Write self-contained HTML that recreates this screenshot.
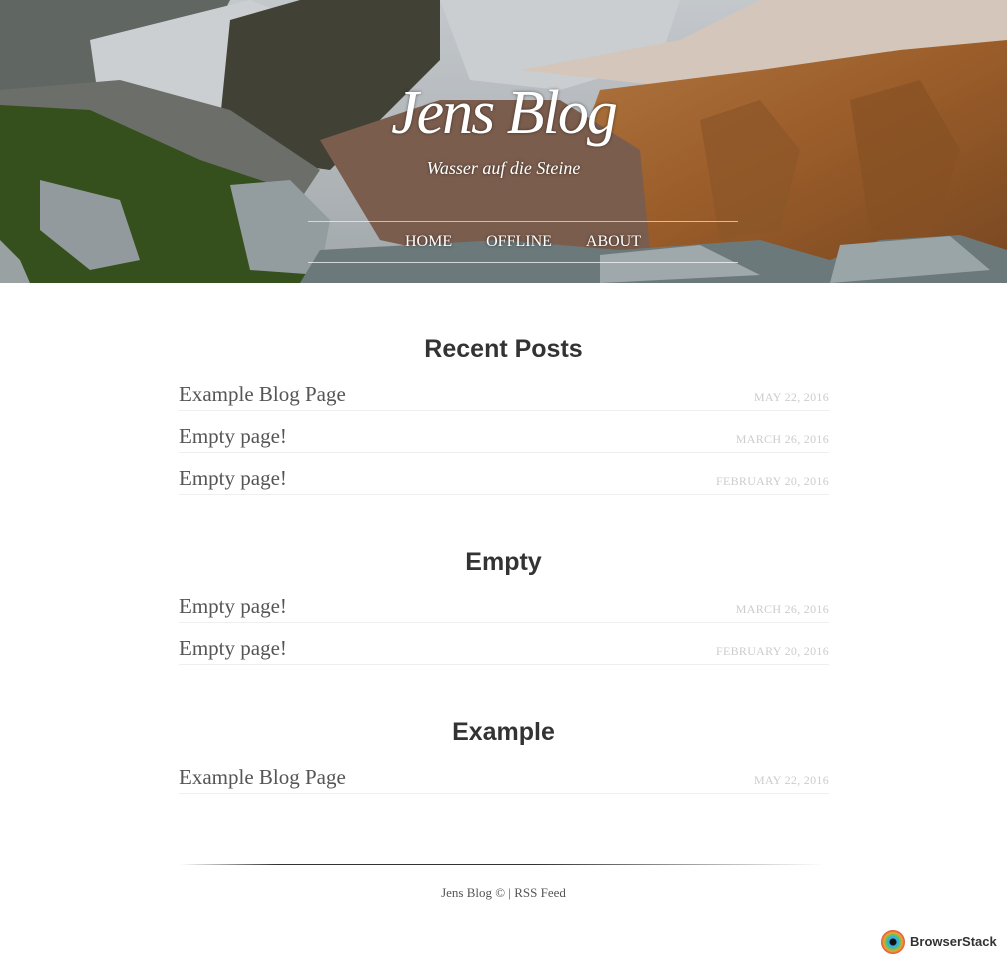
<!DOCTYPE html>
<html><head><meta charset="utf-8"><style>
*{margin:0;padding:0;box-sizing:border-box}
body{width:1007px;height:962px;background:#fff;font-family:"Liberation Serif",serif;position:relative;overflow:hidden}
.hero{position:absolute;left:0;top:0;width:1007px;height:283px;overflow:hidden}
.title{position:absolute;left:0;width:1007px;top:78px;text-align:center;color:#fff;font-family:"Liberation Serif",serif;font-style:italic;font-size:62px;letter-spacing:-2px;text-shadow:0 0 3px rgba(0,0,0,.5)}
.sub{position:absolute;left:0;width:1007px;top:158px;text-align:center;color:#fff;font-style:italic;font-size:18px;text-shadow:0 0 3px rgba(0,0,0,.6)}
.nav{position:absolute;left:308px;width:430px;top:221px;height:42px;border-top:1px solid rgba(255,255,255,.6);border-bottom:1px solid rgba(255,255,255,.7);text-align:center;color:#fff;font-size:16px;line-height:40px;text-shadow:0 0 3px rgba(0,0,0,.6)}
.nav span{margin:0 17px}
h2{font-family:"Liberation Sans",sans-serif;font-weight:bold;font-size:25px;color:#333;text-align:center;position:absolute;left:0;width:1007px}
.row{position:absolute;left:179px;width:650px;height:42px;border-bottom:1px solid #eee}
.row .t{position:absolute;left:0;top:13px;font-size:21px;color:#555}
.row .d{position:absolute;right:0;top:21px;font-size:12px;color:#ccc;letter-spacing:.3px}
.foot{position:absolute;top:885px;left:0;width:1007px;text-align:center;font-size:13px;color:#555}
.hr{position:absolute;left:180px;top:864px;width:645px;height:1px;background:linear-gradient(90deg,rgba(0,0,0,0),#333 15%,#333 55%,rgba(0,0,0,0))}
</style></head><body>
<div class="hero">
<svg width="1007" height="283" viewBox="0 0 1007 283">
<defs>
<linearGradient id="sky" x1="0" y1="0" x2="0" y2="1"><stop offset="0" stop-color="#dfe4e8"/><stop offset="1" stop-color="#b8bfc2"/></linearGradient>
<linearGradient id="or" x1="0" y1="0" x2="1" y2="1"><stop offset="0" stop-color="#c9874a"/><stop offset=".5" stop-color="#b06a30"/><stop offset="1" stop-color="#8a5226"/></linearGradient>
</defs>
<rect width="1007" height="283" fill="url(#sky)"/>
<polygon points="0,0 230,0 200,60 120,90 0,110" fill="#6e7570"/>
<polygon points="90,40 250,0 300,20 260,110 180,130 100,110" fill="#e9ecef"/>
<polygon points="230,20 300,0 440,0 440,60 380,120 330,170 260,160 220,120" fill="#4a4a3e"/>
<polygon points="0,90 120,80 230,110 320,170 300,200 200,190 0,150" fill="#7b7e78"/>
<polygon points="440,0 680,0 660,60 560,90 470,80" fill="#e7ebee"/>
<polygon points="520,70 680,40 760,0 1007,0 1007,60 900,60 800,80 700,90" fill="#f2e2d4"/>
<polygon points="600,90 760,70 900,50 1007,40 1007,260 800,270 650,250 560,200" fill="url(#or)"/>
<polygon points="320,140 440,100 560,100 640,150 650,250 520,270 380,240" fill="#8d6a58"/>
<polygon points="700,120 760,100 800,150 780,230 720,240" fill="#a0622e" opacity=".7"/>
<polygon points="850,100 920,80 960,150 930,240 870,230" fill="#9a5c2a" opacity=".7"/>
<polygon points="0,105 90,110 200,160 290,190 330,283 0,283" fill="#3d5a22"/>
<polygon points="40,180 120,200 140,260 90,270 40,230" fill="#a7b0b3"/>
<polygon points="230,185 290,180 330,220 320,275 250,270" fill="#a8b2b5"/>
<polygon points="0,240 20,260 30,283 0,283" fill="#b0b8ba"/>
<polygon points="320,250 500,240 620,250 760,240 830,260 880,240 960,235 1007,250 1007,283 300,283" fill="#7c8a8c"/>
<polygon points="600,255 700,245 760,275 600,283" fill="#b6c0c3"/>
<polygon points="840,245 950,236 990,270 830,283" fill="#b0bcc0"/>
<rect width="1007" height="283" fill="rgba(0,0,0,.12)"/>
</svg>
<div class="title">Jens Blog</div>
<div class="sub">Wasser auf die Steine</div>
<div class="nav"><span>HOME</span><span>OFFLINE</span><span>ABOUT</span></div>
</div>

<h2 style="top:335px">Recent Posts</h2>
<div class="row" style="top:369px"><span class="t">Example Blog Page</span><span class="d">MAY 22, 2016</span></div>
<div class="row" style="top:411px"><span class="t">Empty page!</span><span class="d">MARCH 26, 2016</span></div>
<div class="row" style="top:453px"><span class="t">Empty page!</span><span class="d">FEBRUARY 20, 2016</span></div>

<h2 style="top:548px">Empty</h2>
<div class="row" style="top:581px"><span class="t">Empty page!</span><span class="d">MARCH 26, 2016</span></div>
<div class="row" style="top:623px"><span class="t">Empty page!</span><span class="d">FEBRUARY 20, 2016</span></div>

<h2 style="top:718px">Example</h2>
<div class="row" style="top:752px"><span class="t">Example Blog Page</span><span class="d">MAY 22, 2016</span></div>

<div class="hr"></div>
<div class="foot">Jens Blog © | RSS Feed</div>

<div style="position:absolute;left:881px;top:930px;width:24px;height:24px;border-radius:50%;background:radial-gradient(circle,#111 0 3px,#3ab0d8 4px 6px,#7bc043 7px 8px,#f2a33a 9px,#e0533a 12px)"></div>
<div style="position:absolute;left:910px;top:934px;font-family:'Liberation Sans',sans-serif;font-weight:bold;font-size:13px;color:#333">BrowserStack</div>
</body></html>
